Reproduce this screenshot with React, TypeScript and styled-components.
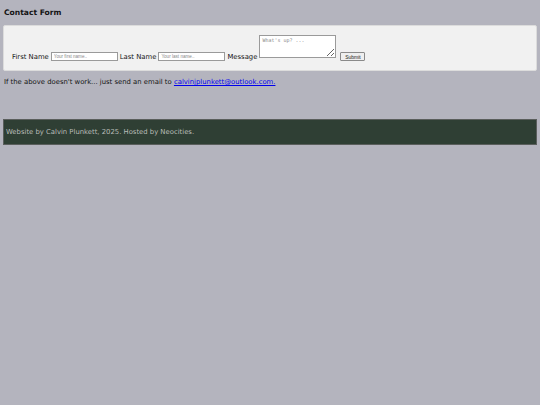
import React from "react";
import styled, { createGlobalStyle } from "styled-components";

const Global = createGlobalStyle`
  html, body { margin: 0; padding: 0; }
  body {
    background: #b4b4be;
    font-family: "DejaVu Sans", Verdana, sans-serif;
    font-size: 6.85px;
    color: #151515;
    min-height: 405px;
  }
`;

const Page = styled.div`
  padding: 7px 3px 0 3px;
  display: flex;
  flex-direction: column;
`;

const Heading = styled.h1`
  margin: 0 0 0 1px;
  font-size: 7.6px;
  font-weight: bold;
  line-height: 12px;
`;

const FormBox = styled.form`
  box-sizing: border-box;
  margin-top: 6px;
  background: #f1f1f1;
  border: 1px solid #dcdcdc;
  border-radius: 2px;
  height: 46px;
  padding: 0 8px 9px 8px;
  display: flex;
  align-items: flex-end;
  gap: 2px;
`;

const Label = styled.label`
  font-size: 6.85px;
  line-height: 8px;
`;

const TextInput = styled.input`
  box-sizing: border-box;
  width: 67px;
  height: 9px;
  padding: 0 2px;
  border: 1px solid #9a9a9a;
  background: #fff;
  font-family: "Liberation Sans", Arial, sans-serif;
  font-size: 4.6px;
  &::placeholder { color: #8a8a8a; }
`;

const Area = styled.textarea`
  box-sizing: border-box;
  width: 77px;
  height: 23px;
  padding: 1px 2px;
  border: 1px solid #9a9a9a;
  background: #fff;
  font-family: "DejaVu Sans Mono", monospace;
  font-size: 5px;
  resize: both;
  margin-bottom: 3px;
  &::placeholder { color: #8a8a8a; }
`;

const Submit = styled.button`
  box-sizing: border-box;
  height: 9px;
  width: 25px;
  margin-left: 2px;
  padding: 0;
  border: 1px solid #8a8a8a;
  border-radius: 1px;
  background: #efefef;
  font-family: "Liberation Sans", Arial, sans-serif;
  font-size: 5px;
  color: #222;
`;

const Note = styled.p`
  margin: 6px 0 0 1px;
  line-height: 10px;
`;

const Link = styled.a`
  color: #0000ee;
  text-decoration: underline;
`;

const Footer = styled.footer`
  margin-top: 32px;
  box-sizing: border-box;
  height: 26px;
  background: #2f3f34;
  border: 1px solid #5a5e5c;
  color: #b9bcb8;
  display: flex;
  align-items: center;
  padding-left: 2px;
`;

export default function App() {
  return (
    <>
      <Global />
      <Page>
        <Heading>Contact Form</Heading>
        <FormBox onSubmit={(e) => e.preventDefault()}>
          <Label>First Name</Label>
          <TextInput placeholder="Your first name.." />
          <Label>Last Name</Label>
          <TextInput placeholder="Your last name.." />
          <Label>Message</Label>
          <Area placeholder="What's up? ..." />
          <Submit type="submit">Submit</Submit>
        </FormBox>
        <Note>
          If the above doesn't work... just send an email to{" "}
          <Link href="#">calvinjplunkett@outlook.com.</Link>
        </Note>
        <Footer>Website by Calvin Plunkett, 2025. Hosted by Neocities.</Footer>
      </Page>
    </>
  );
}
